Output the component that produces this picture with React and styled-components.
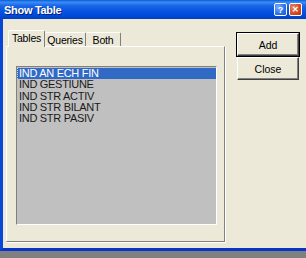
import React from "react";
import styled, { createGlobalStyle } from "styled-components";

const GlobalStyle = createGlobalStyle`
  html, body {
    margin: 0;
    padding: 0;
    background: #808080;
  }
  body {
    width: 306px;
    height: 258px;
    overflow: hidden;
    font-family: "Liberation Sans", Arial, sans-serif;
  }
`;

const tables = [
  "IND AN ECH FIN",
  "IND GESTIUNE",
  "IND STR ACTIV",
  "IND STR BILANT",
  "IND STR PASIV",
];

const tabs = ["Tables", "Queries", "Both"];
const tabWidths = [37, 41, 35];

const App = () => {
  return (
    <>
      <GlobalStyle />
      <Window>
        <TitleBar>
          <Title>Show Table</Title>
          <TitleButtons>
            <CaptionButton>?</CaptionButton>
            <CaptionButton $close>✕</CaptionButton>
          </TitleButtons>
        </TitleBar>
        <Frame>
          <Content>
            <TabArea>
              <TabStrip>
                {tabs.map((t, i) => (
                  <Tab key={t} $active={i === 0} $w={tabWidths[i]}>
                    {t}
                  </Tab>
                ))}
              </TabStrip>
              <Panel>
                <ListBox>
                  {tables.map((name, i) => (
                    <Row key={name} $selected={i === 0}>
                      {name}
                    </Row>
                  ))}
                </ListBox>
              </Panel>
            </TabArea>
            <ButtonCol>
              <Button $default>Add</Button>
              <Button>Close</Button>
            </ButtonCol>
          </Content>
        </Frame>
      </Window>
    </>
  );
};

export default App;

const Window = styled.div`
  width: 306px;
  height: 251px;
  display: flex;
  flex-direction: column;
`;

const TitleBar = styled.div`
  height: 19px;
  display: flex;
  align-items: center;
  padding: 0 4px 0 4px;
  background: linear-gradient(
    to bottom,
    #0a5fd8 0%,
    #3b8cf5 12%,
    #1a66e6 30%,
    #0454e0 60%,
    #0049d6 85%,
    #003ec4 100%
  );
`;

const Title = styled.div`
  color: #fff;
  font-size: 11px;
  font-weight: bold;
  letter-spacing: -0.3px;
  text-shadow: 1px 1px 0 #0a1e79;
`;

const TitleButtons = styled.div`
  margin-left: auto;
  display: flex;
  gap: 2px;
`;

const CaptionButton = styled.div`
  width: 13px;
  height: 13px;
  border: 1px solid #fff;
  border-radius: 2px;
  box-sizing: border-box;
  display: flex;
  align-items: center;
  justify-content: center;
  color: #fff;
  font-size: ${(p) => (p.$close ? "8px" : "9px")};
  font-weight: bold;
  background: ${(p) =>
    p.$close
      ? "radial-gradient(circle at 30% 30%, #e7876b, #d34a24 60%, #b9310f)"
      : "radial-gradient(circle at 30% 30%, #7ab0ff, #2f6fe8 60%, #1e55d0)"};
`;

const Frame = styled.div`
  flex: 1;
  display: flex;
  border-left: 3px solid #0846d8;
  border-bottom: 3px solid #0835c8;
  box-shadow: inset 1px 0 0 #3d6fe8;
`;

const Content = styled.div`
  flex: 1;
  display: flex;
  align-items: flex-start;
  background: #ece9d8;
  padding: 11px 0 0 3px;
`;

const TabArea = styled.div`
  width: 219px;
  display: flex;
  flex-direction: column;
`;

const TabStrip = styled.div`
  height: 16px;
  display: flex;
  align-items: flex-end;
  padding-left: 2px;
  position: relative;
  z-index: 1;
`;

const Tab = styled.div`
  box-sizing: border-box;
  width: ${(p) => p.$w}px;
  height: ${(p) => (p.$active ? "17px" : "14px")};
  margin-bottom: ${(p) => (p.$active ? "-1px" : "0")};
  background: #ece9d8;
  border-top: 1px solid #fff;
  border-left: ${(p) => (p.$active ? "1px solid #fff" : "none")};
  border-right: 1px solid #808080;
  border-radius: 2px 2px 0 0;
  font-size: 10.5px;
  letter-spacing: -0.2px;
  color: #000;
  display: flex;
  align-items: center;
  justify-content: center;
  padding-bottom: ${(p) => (p.$active ? "2px" : "0")};
`;

const Panel = styled.div`
  box-sizing: border-box;
  height: 196px;
  border-top: 1px solid #fff;
  border-left: 1px solid #fff;
  border-right: 1px solid #808080;
  border-bottom: 1px solid #808080;
  box-shadow: 1px 1px 0 #fff;
  padding: 19px 0 0 9px;
`;

const ListBox = styled.div`
  box-sizing: border-box;
  width: 201px;
  height: 159px;
  background: #c0c0c0;
  border-top: 1px solid #808080;
  border-left: 1px solid #808080;
  border-right: 1px solid #fff;
  border-bottom: 1px solid #fff;
  padding: 1px 0 0 0;
`;

const Row = styled.div`
  height: 11.3px;
  line-height: 11.3px;
  font-size: 11px;
  padding-left: 1px;
  color: ${(p) => (p.$selected ? "#fff" : "#1a1a1a")};
  background: ${(p) => (p.$selected ? "#316ac5" : "transparent")};
  border-left: ${(p) => (p.$selected ? "1px dotted #c8d8f4" : "1px solid transparent")};
  white-space: nowrap;
  letter-spacing: -0.3px;
`;

const ButtonCol = styled.div`
  margin: 3px 0 0 12px;
  display: flex;
  flex-direction: column;
  gap: 1px;
`;

const Button = styled.div`
  box-sizing: border-box;
  width: 62px;
  height: 23px;
  background: #ece9d8;
  border-top: 1px solid #fff;
  border-left: 1px solid #fff;
  border-right: 1px solid #404040;
  border-bottom: 1px solid #404040;
  box-shadow: ${(p) =>
    p.$default
      ? "0 0 0 1px #000, inset -1px -1px 0 #808080"
      : "inset -1px -1px 0 #808080"};
  font-size: 10.5px;
  color: #000;
  display: flex;
  align-items: center;
  justify-content: center;
`;
